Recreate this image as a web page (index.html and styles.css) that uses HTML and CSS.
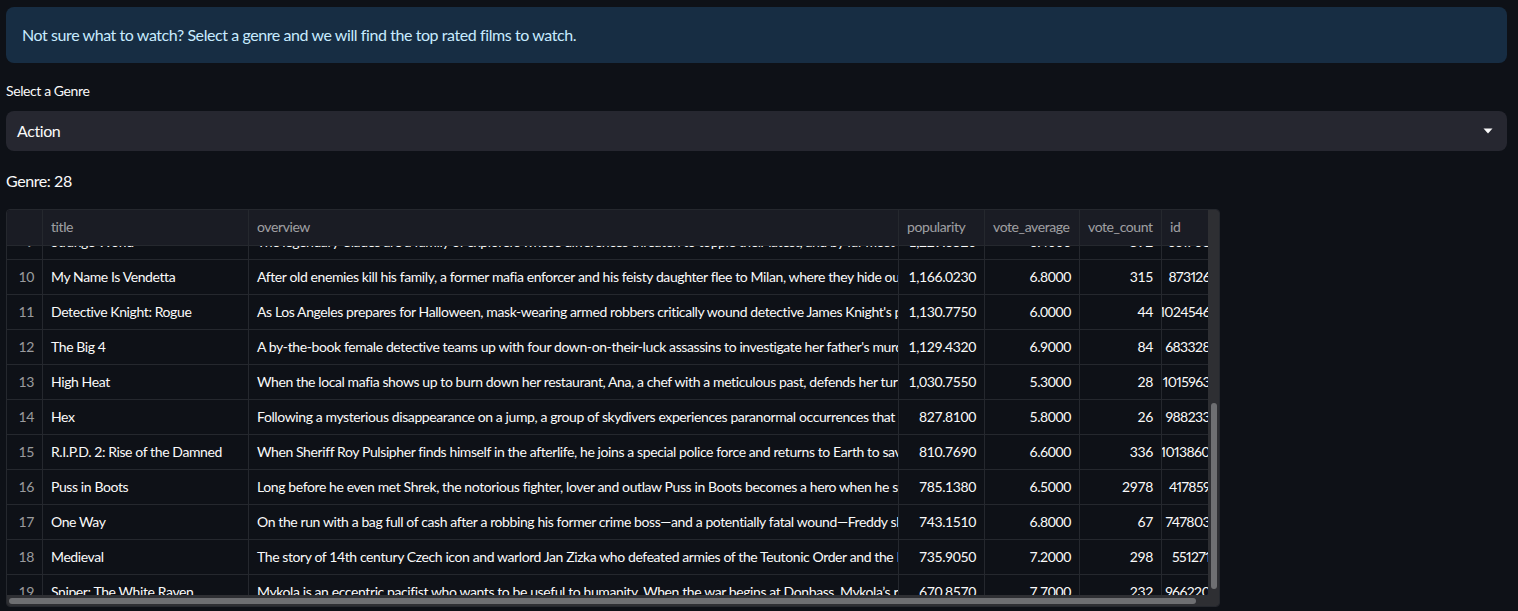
FILE: index.html
```html
<!DOCTYPE html>
<html lang="en">
<head>
<meta charset="utf-8">
<title>Top rated films</title>
<link rel="stylesheet" href="styles.css">
</head>
<body>
<main class="page">
  <div class="info">Not sure what to watch? Select a genre and we will find the top rated films to watch.</div>

  <div class="field">
    <label class="label">Select a Genre</label>
    <div class="select">
      <span class="select-value">Action</span>
      <svg class="caret" width="10" height="6" viewBox="0 0 10 6"><path d="M0.5 0.5 L9.5 0.5 L5 5.5 Z" fill="#fafafa"/></svg>
    </div>
  </div>

  <p class="genre">Genre: 28</p>

  <div class="grid">
    <div class="row head">
      <div class="c idx"></div>
      <div class="c title">title</div>
      <div class="c overview">overview</div>
      <div class="c num pop">popularity</div>
      <div class="c num avg">vote_average</div>
      <div class="c num cnt">vote_count</div>
      <div class="c id">id</div>
    </div>
    <div class="body">
      <div class="rows">
        <div class="row">
          <div class="c idx">9</div>
          <div class="c title">Strange World</div>
          <div class="c overview">The legendary Clades are a family of explorers whose differences threaten to topple their latest, and by far most crucial, mission.</div>
          <div class="c num pop">1,229.6520</div>
          <div class="c num avg">6.4000</div>
          <div class="c num cnt">592</div>
          <div class="c num id">661708</div>
        </div>
        <div class="row">
          <div class="c idx">10</div>
          <div class="c title">My Name Is Vendetta</div>
          <div class="c overview">After old enemies kill his family, a former mafia enforcer and his feisty daughter flee to Milan, where they hide out while plotting their revenge.</div>
          <div class="c num pop">1,166.0230</div>
          <div class="c num avg">6.8000</div>
          <div class="c num cnt">315</div>
          <div class="c num id">873126</div>
        </div>
        <div class="row">
          <div class="c idx">11</div>
          <div class="c title">Detective Knight: Rogue</div>
          <div class="c overview">As Los Angeles prepares for Halloween, mask-wearing armed robbers critically wound detective James Knight's partner during a heist.</div>
          <div class="c num pop">1,130.7750</div>
          <div class="c num avg">6.0000</div>
          <div class="c num cnt">44</div>
          <div class="c num id">1024546</div>
        </div>
        <div class="row">
          <div class="c idx">12</div>
          <div class="c title">The Big 4</div>
          <div class="c overview">A by-the-book female detective teams up with four down-on-their-luck assassins to investigate her father's murder.</div>
          <div class="c num pop">1,129.4320</div>
          <div class="c num avg">6.9000</div>
          <div class="c num cnt">84</div>
          <div class="c num id">683328</div>
        </div>
        <div class="row">
          <div class="c idx">13</div>
          <div class="c title">High Heat</div>
          <div class="c overview">When the local mafia shows up to burn down her restaurant, Ana, a chef with a meticulous past, defends her turf against the mob.</div>
          <div class="c num pop">1,030.7550</div>
          <div class="c num avg">5.3000</div>
          <div class="c num cnt">28</div>
          <div class="c num id">1015963</div>
        </div>
        <div class="row">
          <div class="c idx">14</div>
          <div class="c title">Hex</div>
          <div class="c overview">Following a mysterious disappearance on a jump, a group of skydivers experiences paranormal occurrences that leave them fighting for their lives.</div>
          <div class="c num pop">827.8100</div>
          <div class="c num avg">5.8000</div>
          <div class="c num cnt">26</div>
          <div class="c num id">988233</div>
        </div>
        <div class="row">
          <div class="c idx">15</div>
          <div class="c title">R.I.P.D. 2: Rise of the Damned</div>
          <div class="c overview">When Sheriff Roy Pulsipher finds himself in the afterlife, he joins a special police force and returns to Earth to save humanity.</div>
          <div class="c num pop">810.7690</div>
          <div class="c num avg">6.6000</div>
          <div class="c num cnt">336</div>
          <div class="c num id">1013860</div>
        </div>
        <div class="row">
          <div class="c idx">16</div>
          <div class="c title">Puss in Boots</div>
          <div class="c overview">Long before he even met Shrek, the notorious fighter, lover and outlaw Puss in Boots becomes a hero when he sets off on an adventure.</div>
          <div class="c num pop">785.1380</div>
          <div class="c num avg">6.5000</div>
          <div class="c num cnt">2978</div>
          <div class="c num id">417859</div>
        </div>
        <div class="row">
          <div class="c idx">17</div>
          <div class="c title">One Way</div>
          <div class="c overview">On the run with a bag full of cash after a robbing his former crime boss—and a potentially fatal wound—Freddy slips onto a bus headed into the unforgiving California desert.</div>
          <div class="c num pop">743.1510</div>
          <div class="c num avg">6.8000</div>
          <div class="c num cnt">67</div>
          <div class="c num id">747803</div>
        </div>
        <div class="row">
          <div class="c idx">18</div>
          <div class="c title">Medieval</div>
          <div class="c overview">The story of 14th century Czech icon and warlord Jan Zizka who defeated armies of the Teutonic Order and the Holy Roman Empire.</div>
          <div class="c num pop">735.9050</div>
          <div class="c num avg">7.2000</div>
          <div class="c num cnt">298</div>
          <div class="c num id">551271</div>
        </div>
        <div class="row">
          <div class="c idx">19</div>
          <div class="c title">Sniper: The White Raven</div>
          <div class="c overview">Mykola is an eccentric pacifist who wants to be useful to humanity. When the war begins at Donbass, Mykola’s rational worldview is shattered.</div>
          <div class="c num pop">670.8570</div>
          <div class="c num avg">7.7000</div>
          <div class="c num cnt">232</div>
          <div class="c num id">966220</div>
        </div>
      </div>
    </div>
    <div class="vscroll"><div class="vthumb"></div></div>
    <div class="hscroll"><div class="hthumb"></div></div>
  </div>
</main>
</body>
</html>
```

FILE: styles.css
```css
* { box-sizing: border-box; }

html, body {
  margin: 0;
  padding: 0;
  background: #0e1117;
  color: #fafafa;
  font-family: "Lato", "Liberation Sans", sans-serif;
}

.page {
  padding: 7px 11px 0 6px;
  display: flex;
  flex-direction: column;
}

.info {
  background: #172d43;
  color: #c7ebff;
  border-radius: 8px;
  padding: 16px;
  font-size: 16px;
  line-height: 24px;
  letter-spacing: -0.42px;
}

.field {
  margin-top: 16px;
  display: flex;
  flex-direction: column;
  gap: 8px;
}

.label {
  font-size: 14px;
  line-height: 24px;
  letter-spacing: -0.4px;
}

.select {
  height: 40px;
  background: #262730;
  border-radius: 8px;
  display: flex;
  align-items: center;
  justify-content: space-between;
  padding: 0 14px 0 11px;
}

.select-value {
  font-size: 16px;
  letter-spacing: -0.42px;
  padding-bottom: 1px;
}

.caret { display: block; }

.genre {
  margin: 18px 0 0;
  font-size: 16px;
  line-height: 24px;
  letter-spacing: -0.42px;
}

.grid {
  position: relative;
  margin-top: 16px;
  width: 1214px;
  height: 398px;
  border: 1px solid #25282e;
  border-radius: 4px;
  overflow: hidden;
  display: flex;
  flex-direction: column;
  font-size: 14px;
  letter-spacing: -0.4px;
}

.row {
  display: flex;
  height: 35px;
  border-bottom: 1px solid #25282e;
  flex: none;
}

.head {
  height: 36px;
  background: #1a1c24;
  color: rgba(250, 250, 250, 0.6);
  z-index: 1;
}

.body {
  flex: 1;
  overflow: hidden;
}

.rows {
  margin-top: -21px;
}

.c {
  flex: none;
  display: flex;
  align-items: center;
  padding: 0 8px 1px;
  white-space: nowrap;
  overflow: hidden;
  border-right: 1px solid #25282e;
}

.head .c { padding-bottom: 2px; }

.idx { width: 36px; justify-content: flex-end; color: rgba(250, 250, 250, 0.6); }
.title { width: 206px; }
.overview { width: 650px; }
.pop { width: 86px; }
.avg { width: 95px; }
.cnt { width: 82px; }
.id { width: 58px; border-right: none; }

.num { justify-content: flex-end; }
.head .num { justify-content: flex-start; }

.rows .id {
  padding-left: 0;
  padding-right: 10px;
  letter-spacing: -0.6px;
  font-variant-numeric: proportional-nums;
}

.vscroll {
  position: absolute;
  top: 0;
  right: 0;
  width: 11px;
  bottom: 0;
  background: #2e2f33;
  z-index: 2;
}

.vthumb {
  position: absolute;
  left: 3px;
  width: 6px;
  top: 193px;
  height: 186px;
  border-radius: 3px;
  background: #6e6f72;
}

.hscroll {
  position: absolute;
  left: 0;
  right: 11px;
  bottom: 0;
  height: 11px;
  background: #2e2f33;
  z-index: 2;
}

.hthumb {
  position: absolute;
  left: 2px;
  width: 1187px;
  top: 3px;
  height: 6px;
  border-radius: 3px;
  background: #6e6f72;
}
```
